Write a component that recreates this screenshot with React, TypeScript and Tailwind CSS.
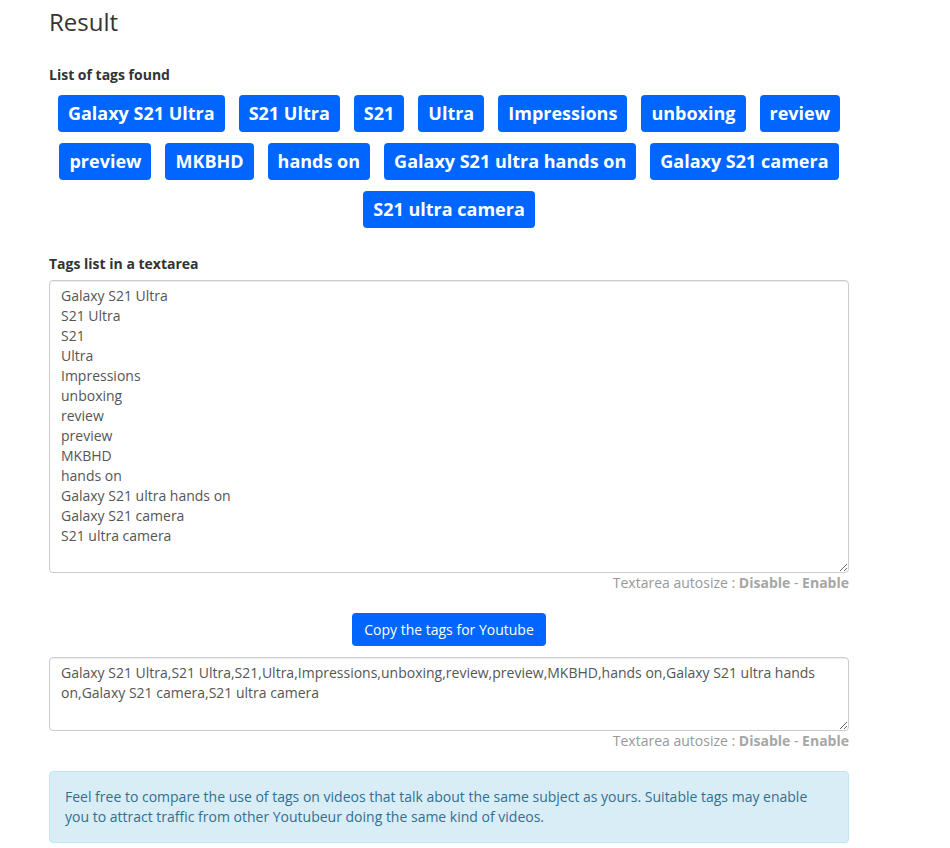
import React from "react";

const tags = [
  "Galaxy S21 Ultra",
  "S21 Ultra",
  "S21",
  "Ultra",
  "Impressions",
  "unboxing",
  "review",
  "preview",
  "MKBHD",
  "hands on",
  "Galaxy S21 ultra hands on",
  "Galaxy S21 camera",
  "S21 ultra camera",
];

function Autosize() {
  return (
    <div className="h-[20px] text-right text-[14px] leading-[20px] text-[#999]">
      Textarea autosize : <b className="font-bold text-[#a6a6a6]">Disable</b> -{" "}
      <b className="font-bold text-[#a6a6a6]">Enable</b>
    </div>
  );
}

export default function App() {
  return (
    <div
      className="min-h-[848px] bg-white text-[#333]"
      style={{ fontFamily: '"Open Sans", "Liberation Sans", sans-serif' }}
    >
      <div className="ml-[49px] flex w-[800px] flex-col pt-[9px]">
        <h1 className="text-[24px] font-normal leading-[26px] text-[#333]">Result</h1>
        <div className="mt-[30px] text-[14px] font-bold leading-[20px]">List of tags found</div>
        <div className="mt-[10px] flex flex-wrap justify-center gap-x-[14px] gap-y-[11px]">
          {tags.map((t) => (
            <span
              key={t}
              className="rounded-[4px] bg-[#0066ff] px-[10px] py-[5px] text-[18px] font-bold leading-[27px] text-white"
            >
              {t}
            </span>
          ))}
        </div>
        <div className="mt-[26px] text-[14px] font-bold leading-[20px]">Tags list in a textarea</div>
        <textarea
          readOnly
          className="mt-[6px] h-[293px] w-full rounded-[4px] border border-[#ccc] px-[11px] pt-[5px] pb-[6px] text-[14px] leading-[20px] text-[#555] shadow-[inset_0_1px_1px_rgba(0,0,0,0.075)] outline-none"
          defaultValue={tags.join("\n")}
        />
        <Autosize />
        <div className="mt-[20px] flex justify-center">
          <button className="h-[33px] rounded-[4px] bg-[#0066ff] px-[12px] text-[14px] leading-[20px] text-white">
            Copy the tags for Youtube
          </button>
        </div>
        <textarea
          readOnly
          className="mt-[11px] h-[74px] w-full rounded-[4px] border border-[#ccc] px-[11px] pt-[5px] pb-[6px] text-[14px] leading-[20px] text-[#555] shadow-[inset_0_1px_1px_rgba(0,0,0,0.075)] outline-none"
          defaultValue={tags.join(",")}
        />
        <Autosize />
        <div className="mt-[20px] rounded-[4px] border border-[#bce8f1] bg-[#d9edf7] px-[15px] py-[15px] text-[14px] leading-[20px] text-[#31708f]">
          Feel free to compare the use of tags on videos that talk about the same subject as yours. Suitable tags may
          enable you to attract traffic from other Youtubeur doing the same kind of videos.
        </div>
      </div>
    </div>
  );
}
